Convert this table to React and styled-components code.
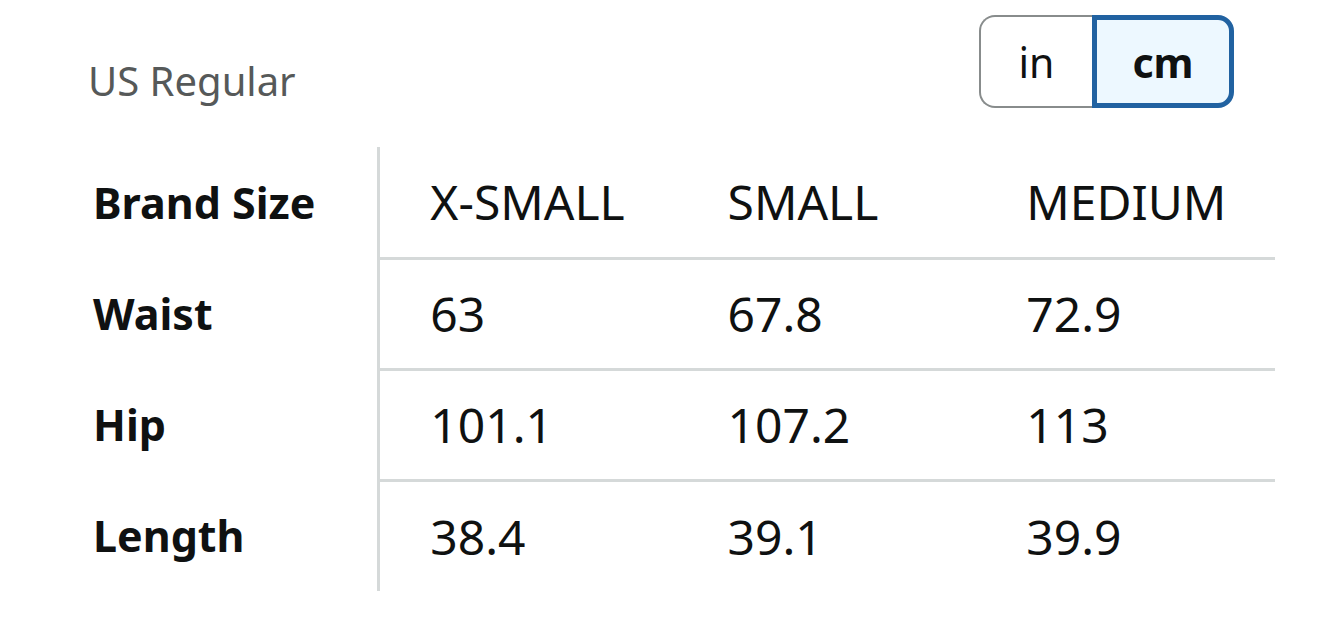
import React, { useState } from "react";
import styled, { createGlobalStyle } from "styled-components";

const GlobalStyle = createGlobalStyle`
  body {
    margin: 0;
    background: #ffffff;
    font-family: "Noto Sans", "Open Sans", Arial, sans-serif;
    color: #0f1111;
  }
`;

const Page = styled.div`
  width: 1320px;
  height: 638px;
  padding: 15px 45px 0 45px;
  box-sizing: border-box;
  background: #fff;
`;

const TopBar = styled.div`
  display: flex;
  justify-content: space-between;
  align-items: flex-start;
  padding: 0 41px 0 43px;
`;

const Region = styled.div`
  margin-top: 42px;
  font-size: 40px;
  line-height: 48px;
  color: #565959;
`;

const Toggle = styled.div`
  display: flex;
  height: 93px;
`;

const UnitButton = styled.button`
  box-sizing: border-box;
  height: 93px;
  width: ${({ $active }) => ($active ? "142px" : "113px")};
  font-family: inherit;
  font-size: 41px;
  font-weight: ${({ $active }) => ($active ? 700 : 400)};
  color: #0f1111;
  cursor: pointer;
  background: ${({ $active }) => ($active ? "#edf8ff" : "#ffffff")};
  border: ${({ $active }) =>
    $active ? "5px solid #2162a1" : "2px solid #888c8c"};
  border-right-width: ${({ $active }) => ($active ? "5px" : "0")};
  border-radius: ${({ $active }) => ($active ? "0 16px 16px 0" : "16px 0 0 16px")};
  padding: 0;
`;

const Table = styled.table`
  margin-top: 39px;
  border-collapse: collapse;
  table-layout: fixed;
  width: 1230px;
`;

const LabelCell = styled.th`
  width: 333px;
  height: 111px;
  padding: 0 0 0 48px;
  box-sizing: border-box;
  text-align: left;
  font-size: 43px;
  font-weight: 700;
  border-right: 3px solid #d5d9d9;
`;

const ValueCell = styled.td`
  width: 298px;
  height: 111px;
  padding: 0 0 0 50px;
  box-sizing: border-box;
  text-align: left;
  font-size: 48px;
  font-weight: 400;
  border-bottom: ${({ $last }) => ($last ? "none" : "3px solid #d5d9d9")};
`;

const columns = ["X-SMALL", "SMALL", "MEDIUM"];

const rows = [
  { label: "Waist", values: ["63", "67.8", "72.9"] },
  { label: "Hip", values: ["101.1", "107.2", "113"] },
  { label: "Length", values: ["38.4", "39.1", "39.9"] },
];

const App = () => {
  const [unit, setUnit] = useState("cm");

  return (
    <Page>
      <GlobalStyle />
      <TopBar>
        <Region>US Regular</Region>
        <Toggle>
          <UnitButton $active={unit === "in"} onClick={() => setUnit("in")}>
            in
          </UnitButton>
          <UnitButton $active={unit === "cm"} onClick={() => setUnit("cm")}>
            cm
          </UnitButton>
        </Toggle>
      </TopBar>
      <Table>
        <tbody>
          <tr>
            <LabelCell>Brand Size</LabelCell>
            {columns.map((c) => (
              <ValueCell key={c}>{c}</ValueCell>
            ))}
          </tr>
          {rows.map((r, i) => (
            <tr key={r.label}>
              <LabelCell>{r.label}</LabelCell>
              {r.values.map((v, j) => (
                <ValueCell key={j} $last={i === rows.length - 1}>
                  {v}
                </ValueCell>
              ))}
            </tr>
          ))}
        </tbody>
      </Table>
    </Page>
  );
};

export default App;
